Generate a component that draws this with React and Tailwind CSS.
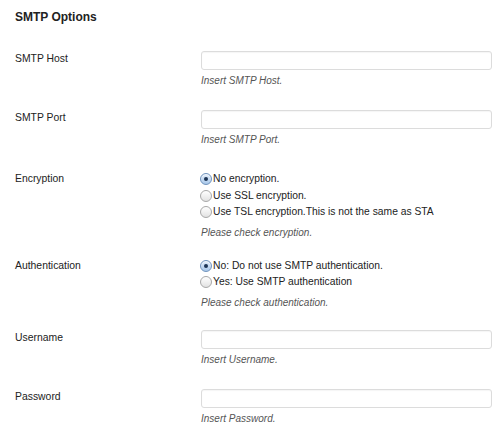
import React from "react";

// Custom-drawn radio dot in the classic Aqua style
function Radio({ checked }) {
  return checked ? (
    <span className="relative inline-flex h-[12px] w-[12px] shrink-0 items-center justify-center rounded-full border border-[#6f93bd] bg-gradient-to-b from-[#e4eefa] to-[#a9c8ea] shadow-[inset_0_1px_1px_rgba(255,255,255,0.8)]">
      <span className="h-[4px] w-[4px] rounded-full bg-[#1d3556]" />
    </span>
  ) : (
    <span className="inline-flex h-[12px] w-[12px] shrink-0 rounded-full border border-[#a8a8a8] bg-gradient-to-b from-[#ffffff] to-[#e2e2e2]" />
  );
}

function TextField({ label, help, className = "", type = "text" }) {
  return (
    <div className={"flex " + className}>
      <div className="w-[186px] shrink-0 pt-[1px] text-[10.4px] leading-[14px] text-[#222]">
        {label}
      </div>
      <div className="w-[291px]">
        <input
          type={type}
          className="block h-[19px] w-full rounded-[3px] border border-[#dcdcdc] bg-white shadow-[inset_0_1px_1px_rgba(0,0,0,0.04)] outline-none"
        />
        <p className="mt-[4px] text-[10px] italic leading-[14px] text-[#555]">{help}</p>
      </div>
    </div>
  );
}

function RadioField({ label, options, help, helpGap, className = "" }) {
  return (
    <div className={"flex " + className}>
      <div className="w-[185px] shrink-0 text-[10.4px] leading-[16px] text-[#222]">{label}</div>
      <div className="flex-1">
        {options.map((o, i) => (
          <label key={i} className="flex h-[16.5px] items-center gap-[1px] text-[10.3px] leading-[16px] text-[#222]">
            <Radio checked={i === 0} />
            <span>{o}</span>
          </label>
        ))}
        <p className={"pl-[1px] text-[10px] italic leading-[14px] text-[#555] " + helpGap}>{help}</p>
      </div>
    </div>
  );
}

export default function App() {
  return (
    <div className="h-[435px] w-[500px] overflow-hidden bg-white pl-[15px] font-['Liberation_Sans',Arial,sans-serif]">
      <h3 className="pt-[10px] text-[12px] font-bold leading-[14px] text-[#222]">SMTP Options</h3>
      <div className="mt-[27px] flex flex-col">
        <TextField label="SMTP Host" help="Insert SMTP Host." className="mb-[22px]" />
        <TextField label="SMTP Port" help="Insert SMTP Port." className="mb-[24px]" />
        <RadioField
          label="Encryption"
          options={["No encryption.", "Use SSL encryption.", "Use TSL encryption.This is not the same as STA"]}
          help="Please check encryption."
          helpGap="mt-[5px]"
          className="mb-[18px]"
        />
        <RadioField
          label="Authentication"
          options={["No: Do not use SMTP authentication.", "Yes: Use SMTP authentication"]}
          help="Please check authentication."
          helpGap="mt-[5px]"
          className="mb-[20px]"
        />
        <TextField label="Username" help="Insert Username." className="mb-[22px]" />
        <TextField label="Password" help="Insert Password." type="password" />
      </div>
    </div>
  );
}
